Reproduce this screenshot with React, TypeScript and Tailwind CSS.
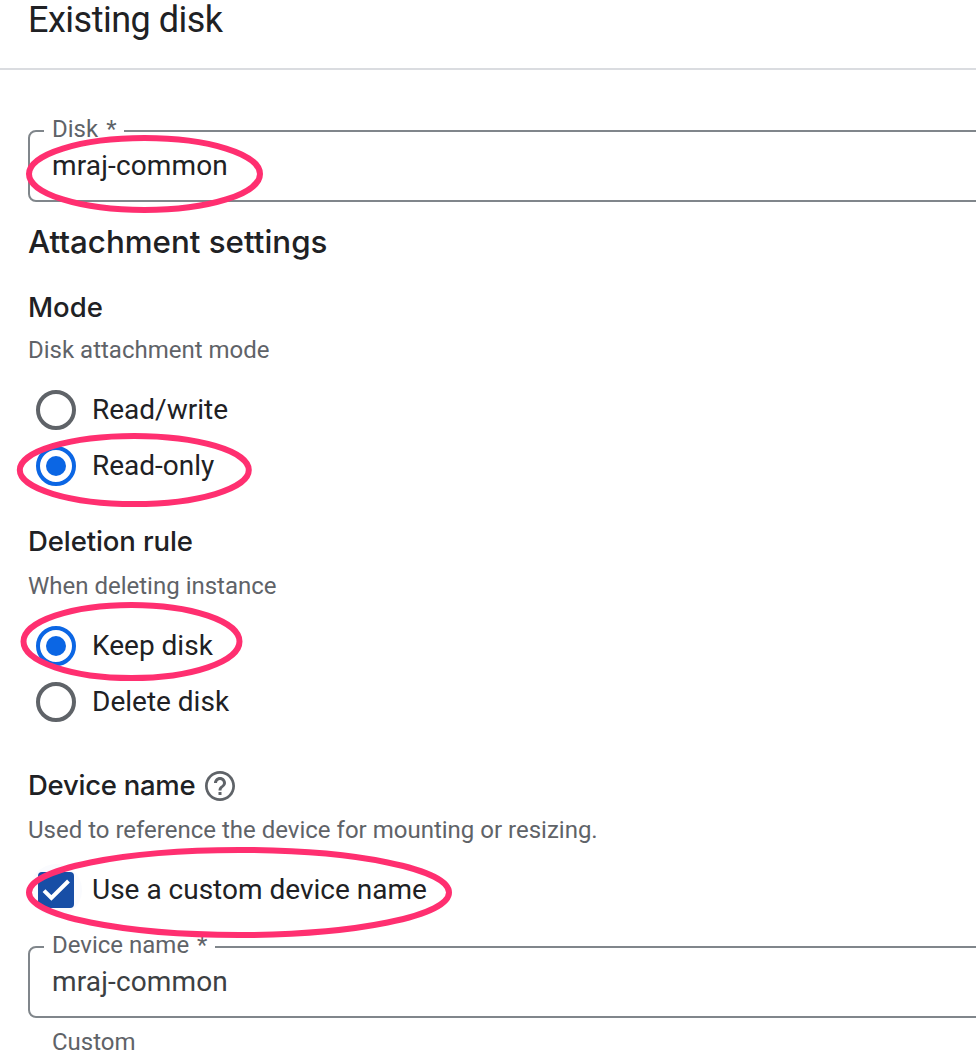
import type { ReactNode } from "react";

function Field({ label, value, valueClass }: { label: string; value: string; valueClass: string }) {
  return (
    <div className="relative -mr-2 flex h-[72px] items-center rounded-lg border-2 border-[#80868b] pl-[22px]">
      <span className="absolute -top-[19px] left-[14px] flex bg-white pr-2 pl-2 text-2xl leading-8 text-[#5f6368]">
        {label}
        <span className="ml-2">*</span>
      </span>
      <span className={`-mt-px text-[28px] leading-9 tracking-[0.15px] ${valueClass}`}>{value}</span>
    </div>
  );
}

function Radio({ label, checked = false }: { label: string; checked?: boolean }) {
  return (
    <label className="flex h-14 items-center gap-4 pl-2">
      <span
        className={`flex size-10 items-center justify-center rounded-full border-4 ${
          checked ? "border-[#0b66e4]" : "border-[#5f6368]"
        }`}
      >
        {checked && <span className="size-5 rounded-full bg-[#0b66e4]" />}
      </span>
      <span className="text-[28px] leading-9 text-[#202124]">{label}</span>
    </label>
  );
}

function Subheading({ children, className }: { children: ReactNode; className: string }) {
  return (
    <h3
      className={`flex h-9 items-center font-['Inter',sans-serif] text-[27.5px] leading-9 font-medium text-[#202124] ${className}`}
    >
      {children}
    </h3>
  );
}

function Description({ children, className }: { children: ReactNode; className: string }) {
  return <p className={`text-2xl text-[#5f6368] ${className}`}>{children}</p>;
}

const marks = [
  { cx: 144.5, cy: 174, rx: 115.5, ry: 36 },
  { cx: 134.3, cy: 470, rx: 114.5, ry: 34 },
  { cx: 131.5, cy: 641.5, rx: 108, ry: 36.5 },
  { cx: 239, cy: 892.5, rx: 210, ry: 42.5 },
];

export default function App() {
  return (
    <div className="relative h-[1052px] overflow-hidden bg-white font-['Roboto',sans-serif]">
      <header className="h-[70px] border-b-2 border-[#dadce0] pl-7">
        <h1 className="text-4xl leading-10 tracking-[-0.5px] text-[#202124]">Existing disk</h1>
      </header>
      <main className="flex flex-col pt-[60px] pl-7">
        <Field label="Disk" value="mraj-common" valueClass="text-[#202124]" />
        <h2 className="mt-5 font-['Inter',sans-serif] text-[31.3px] leading-10 font-medium text-[#202124]">
          Attachment settings
        </h2>
        <Subheading className="mt-[27px]">Mode</Subheading>
        <Description className="mt-[9px] leading-8">Disk attachment mode</Description>
        <div className="mt-4">
          <Radio label="Read/write" />
          <Radio label="Read-only" checked />
        </div>
        <Subheading className="mt-[29px] tracking-[-0.1px]">Deletion rule</Subheading>
        <Description className="mt-[11px] leading-8">When deleting instance</Description>
        <div className="mt-4">
          <Radio label="Keep disk" checked />
          <Radio label="Delete disk" />
        </div>
        <Subheading className="mt-[38px] gap-[7px]">
          <span className="-mt-0.5 tracking-[-0.27px]">Device name</span>
          <svg className="size-9" viewBox="0 0 24 24" fill="#5f6368">
            <path d="M11 18h2v-2h-2v2zm1-16C6.480 2 2 6.480 2 12s4.480 10 10 10 10-4.480 10-10S17.520 2 12 2zm0 18.200c-4.520 0-8.200-3.680-8.200-8.200S7.480 3.800 12 3.800s8.200 3.680 8.200 8.200-3.680 8.200-8.200 8.200zm0-14.200c-2.210 0-4 1.790-4 4h2c0-1.100.9-2 2-2s2 .9 2 2c0 2-3 1.750-3 5h2c0-2.250 3-2.500 3-5 0-2.210-1.790-4-4-4z" />
          </svg>
        </Subheading>
        <Description className="mt-[10px] leading-8">
          Used to reference the device for mounting or resizing.
        </Description>
        <label className="mt-4 flex h-14 items-center gap-[10px] pl-0.5">
          <span className="flex size-[52px] items-center justify-center rounded-full bg-[#fafbfe]">
            <span className="flex size-9 items-center justify-center rounded bg-[#174ea6]">
              <svg className="size-9" viewBox="0 0 36 36" fill="none" stroke="#fff" strokeWidth="4">
                <path d="M6 18.700 13.400 26 30.500 9" />
              </svg>
            </span>
          </span>
          <span className="text-[28px] leading-9 text-[#202124]">Use a custom device name</span>
        </label>
        <div className="mt-7">
          <Field label="Device name" value="mraj-common" valueClass="text-[#3c4043]" />
        </div>
        <Description className="mt-[14px] pl-6 leading-5">Custom</Description>
      </main>
      <svg
        className="pointer-events-none absolute inset-0"
        width="976"
        height="1052"
        fill="none"
        stroke="#ff2f70"
        strokeWidth="6"
      >
        {marks.map((m) => (
          <ellipse key={m.cy} {...m} />
        ))}
      </svg>
    </div>
  );
}
